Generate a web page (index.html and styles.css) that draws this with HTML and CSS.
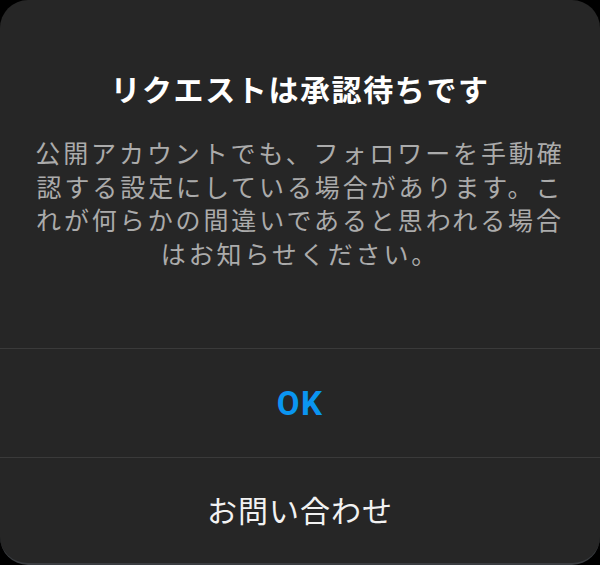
FILE: index.html
```html
<!DOCTYPE html>
<html lang="ja">
<head>
    <meta charset="UTF-8">
    <meta name="viewport" content="width=device-width, initial-scale=1.0">
    <title>リクエストは承認待ちです</title>
    <link rel="stylesheet" href="styles.css">
</head>
<body>
    <div class="dialog">
        <div class="dialog-body">
            <h2 class="dialog-title">リクエストは承認待ちです</h2>
            <p class="dialog-text">公開アカウントでも、フォロワーを手動確<br>認する設定にしている場合があります。こ<br>れが何らかの間違いであると思われる場合<br>はお知らせください。</p>
        </div>
        <button class="dialog-action primary">OK</button>
        <button class="dialog-action last">お問い合わせ</button>
    </div>
</body>
</html>
```

FILE: styles.css
```css
body {
    margin: 0;
    padding: 0;
    background: #000;
    font-family: "Noto Sans CJK JP", "Noto Sans", sans-serif;
    height: 565px;
    overflow: hidden;
}

.dialog {
    height: 563px;
    background: #262626;
    border-radius: 28px;
    display: flex;
    flex-direction: column;
    border-bottom: 2px solid #3a3d41;
    box-sizing: content-box;
}

.dialog-body {
    padding: 68px 10px 0;
    height: 280px;
    text-align: center;
}

.dialog-title {
    margin: 0;
    color: #fff;
    font-size: 30px;
    font-weight: 700;
    line-height: 40px;
    letter-spacing: 1.6px;
}

.dialog-text {
    margin: 28px 0 0;
    color: #ababab;
    font-size: 25px;
    line-height: 33.5px;
    letter-spacing: 2.9px;
}

.dialog-action {
    display: block;
    width: 100%;
    height: 109px;
    margin: 0;
    padding: 0;
    border: none;
    border-top: 1px solid #3a3a3a;
    background: transparent;
    color: #f2f2f2;
    font-family: "Noto Sans CJK JP", sans-serif;
    font-size: 30px;
    letter-spacing: 1px;
    cursor: pointer;
}

.dialog-action.primary {
    color: #0a95f0;
    font-family: Roboto, "Noto Sans CJK JP", sans-serif;
    font-weight: 700;
    font-size: 33px;
    letter-spacing: 1.5px;
}

.dialog-action.last {
    height: 105px;
    padding-bottom: 2px;
}
```
